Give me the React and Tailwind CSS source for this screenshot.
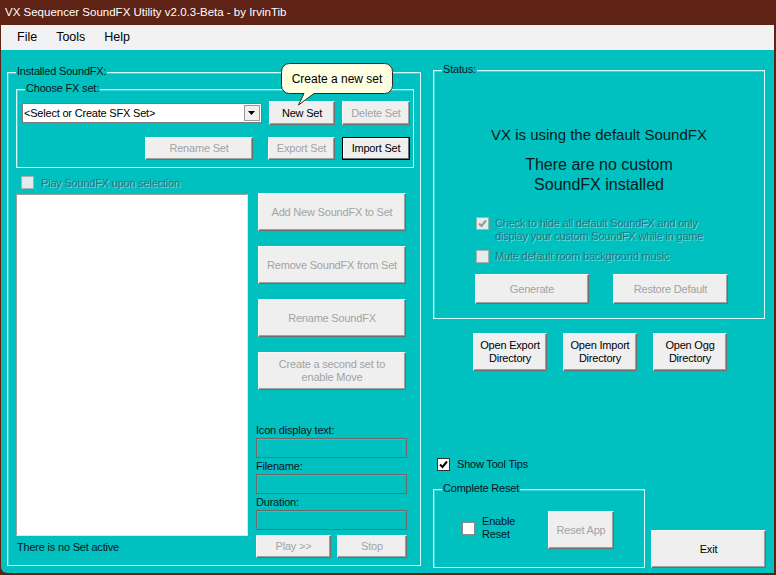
import React from 'react';

const Check = ({ color = '#000' }) => (
  <svg width="11" height="11" viewBox="0 0 11 11" className="block">
    <path d="M2 5.5 L4.5 8 L9 2.5" fill="none" stroke={color} strokeWidth="2" />
  </svg>
);

const CheckBox = ({ checked, disabled, strong }) => {
  const box = disabled
    ? 'bg-[#e3ecec] border-[#a8b0b0]'
    : strong
    ? 'bg-white border-[#333333]'
    : 'bg-white border-[#8a8a8a]';
  return (
    <div className={`w-[13px] h-[13px] shrink-0 border ${box} flex items-center justify-center`}>
      {checked && <Check color={disabled ? '#8f9a9a' : '#000'} />}
    </div>
  );
};

const Btn = ({ className = '', disabled, focus, children }) => (
  <div
    className={`flex items-center justify-center text-center leading-[13px] whitespace-nowrap bg-[#efefef] border shrink-0 ${
      focus
        ? 'border-black shadow-[inset_-1px_-1px_0_#707070,inset_1px_1px_0_#fff]'
        : 'border-t-[#fbfbfb] border-l-[#fbfbfb] border-r-[#6e6e6e] border-b-[#6e6e6e] shadow-[inset_-1px_-1px_0_#a0a0a0]'
    } ${disabled ? 'text-[#a3a3a3]' : 'text-black'} ${className}`}
  >
    <span>{children}</span>
  </div>
);

const Group = ({ label, className = '', children }) => (
  <div className={`relative border border-[#d8ffff] shadow-[inset_1px_1px_0_#3fd4d4] shrink-0 ${className}`}>
    <span className="absolute left-[8px] top-[-8px] px-[1px] bg-[#00c0c0] leading-[13px] whitespace-nowrap">{label}</span>
    {children}
  </div>
);

const Field = () => (
  <div className="w-[151px] h-[20px] border border-[#6a6a6a] shadow-[inset_1px_1px_0_#8a9a9a]" />
);

const Tooltip = () => (
  <div className="absolute left-[280px] top-[13px] w-[112px] h-[44px] tracking-normal">
    <svg width="112" height="44" className="absolute left-0 top-0">
      <path
        d="M8.5 0.5 H103.5 A8 8 0 0 1 111.5 8.5 V22.5 A8 8 0 0 1 103.5 30.5 H33 L17.5 42 L23 30.5 H8.5 A8 8 0 0 1 0.5 22.5 V8.5 A8 8 0 0 1 8.5 0.5 Z"
        fill="#ffffe1"
        stroke="#2b2b2b"
      />
    </svg>
    <div className="relative h-[31px] flex items-center justify-center text-[12px] text-black">
      Create a new set
    </div>
  </div>
);

export default function App() {
  return (
    <div className="w-[776px] h-[575px] bg-[#5e2314] flex flex-col overflow-hidden font-['Liberation_Sans',Arial,sans-serif]">
      <div className="h-[25px] shrink-0 flex items-center pl-[5px] text-white text-[11.5px]">
        VX Sequencer SoundFX Utility v2.0.3-Beta - by IrvinTib
      </div>
      <div className="flex-1 ml-[1px] mr-[2px] mb-[2px] flex flex-col rounded-bl-[6px] overflow-hidden">
        <div className="h-[25px] shrink-0 bg-[#f2f2f2] flex items-center text-[12.5px] text-black">
          <span className="ml-[16px]">File</span>
          <span className="ml-[19px]">Tools</span>
          <span className="ml-[19px]">Help</span>
        </div>

        <div className="flex-1 bg-[#00c0c0] relative flex items-start text-[11px] tracking-[-0.2px] text-[#0b1520]">
          {/* left: installed soundfx */}
          <Group label="Installed SoundFX:" className="ml-[6px] mt-[22px] w-[414px] h-[494px] flex flex-col">
            <Group label="Choose FX set:" className="ml-[8px] mt-[16px] w-[398px] h-[79px] flex flex-col">
              <div className="flex items-center mt-[11px]">
                <div className="ml-[5px] w-[240px] h-[20px] bg-white border border-[#7a7a7a] flex items-center">
                  <span className="pl-[1px] flex-1 text-black">&lt;Select or Create SFX Set&gt;</span>
                  <div className="w-[16px] h-[16px] mr-[1px] border border-[#9a9a9a] bg-[#f0f0f0] flex items-center justify-center">
                    <svg width="8" height="5" viewBox="0 0 8 5">
                      <path d="M0 0 H7 L3.5 4 Z" fill="#000" />
                    </svg>
                  </div>
                </div>
                <Btn className="ml-[7px] w-[66px] h-[24px]">New Set</Btn>
                <Btn disabled className="ml-[7px] w-[68px] h-[24px]">Delete Set</Btn>
              </div>
              <div className="flex mt-[12px]">
                <Btn disabled className="ml-[128px] w-[108px] h-[23px]">Rename Set</Btn>
                <Btn disabled className="ml-[15px] w-[67px] h-[23px]">Export Set</Btn>
                <Btn focus className="ml-[7px] w-[68px] h-[23px]">Import Set</Btn>
              </div>
            </Group>

            <div className="flex items-center mt-[8px] ml-[13px] h-[13px]">
              <CheckBox disabled />
              <span className="ml-[7px] mt-[2px] text-[#2d7380] [text-shadow:1px_1px_0_#60dede]">
                Play SoundFX upon selection
              </span>
            </div>

            <div className="flex mt-[4px]">
              <div className="ml-[8px] flex flex-col">
                <div className="mt-[1px] w-[232px] h-[342px] bg-white border border-t-[#a0a0a0] border-l-[#a0a0a0] border-r-[#e3e3e3] border-b-[#e3e3e3]" />
                <span className="mt-[5px] ml-[1px] leading-[13px]">There is no Set active</span>
              </div>
              <div className="ml-[8px] w-[151px] flex flex-col">
                <Btn disabled className="ml-[2px] w-[148px] h-[38px]">Add New SoundFX to Set</Btn>
                <Btn disabled className="ml-[2px] mt-[15px] w-[148px] h-[38px]">Remove SoundFX from Set</Btn>
                <Btn disabled className="ml-[2px] mt-[15px] w-[148px] h-[38px]">Rename SoundFX</Btn>
                <Btn disabled className="ml-[2px] mt-[15px] w-[148px] h-[38px]">
                  Create a second set to
                  <br />
                  enable Move
                </Btn>
                <span className="mt-[34px] leading-[13px]">Icon display text:</span>
                <div className="mt-[1px]"><Field /></div>
                <span className="mt-[2px] leading-[13px]">Filename:</span>
                <div className="mt-[1px]"><Field /></div>
                <span className="mt-[2px] leading-[13px]">Duration:</span>
                <div className="mt-[1px]"><Field /></div>
                <div className="flex mt-[5px]">
                  <Btn disabled className="w-[75px] h-[23px]">Play &gt;&gt;</Btn>
                  <Btn disabled className="ml-[6px] w-[70px] h-[23px]">Stop</Btn>
                </div>
              </div>
            </div>
          </Group>

          {/* right column */}
          <div className="ml-[12px] flex flex-col">
            <Group label="Status:" className="mt-[20px] w-[332px] h-[249px] flex flex-col">
              <div className="mt-[55px] text-center text-[15px] tracking-normal leading-[18px] text-[#0a1a1a]">
                VX is using the default SoundFX
              </div>
              <div className="mt-[11px] text-center text-[16px] tracking-normal leading-[20px] text-[#0a1a1a]">
                There are no custom
                <br />
                SoundFX installed
              </div>
              <div className="flex items-start mt-[22px] ml-[42px] text-[#2d7380] [text-shadow:1px_1px_0_#60dede]">
                <CheckBox disabled checked />
                <span className="ml-[6px] leading-[13px]">
                  Check to hide all default SoundFX and only
                  <br />
                  display your custom SoundFX while in game
                </span>
              </div>
              <div className="flex items-center mt-[7px] ml-[42px] text-[#2d7380] [text-shadow:1px_1px_0_#60dede]">
                <CheckBox disabled />
                <span className="ml-[6px] leading-[13px]">Mute default room background music</span>
              </div>
              <div className="flex mt-[11px] ml-[41px]">
                <Btn disabled className="w-[114px] h-[30px]">Generate</Btn>
                <Btn disabled className="ml-[24px] w-[115px] h-[30px]">Restore Default</Btn>
              </div>
            </Group>

            <div className="flex mt-[14px] ml-[40px]">
              <Btn className="w-[74px] h-[38px]">Open Export<br />Directory</Btn>
              <Btn className="ml-[16px] w-[74px] h-[38px]">Open Import<br />Directory</Btn>
              <Btn className="ml-[16px] w-[74px] h-[38px]">Open Ogg<br />Directory</Btn>
            </div>

            <div className="flex items-center mt-[87px] ml-[4px] h-[13px]">
              <CheckBox checked strong />
              <span className="ml-[7px]">Show Tool Tips</span>
            </div>

            <div className="flex items-end mt-[18px]">
              <Group label="Complete Reset" className="w-[212px] h-[79px] flex items-start">
                <div className="ml-[28px] mt-[32px] w-[86px] flex items-start">
                  <CheckBox />
                  <span className="ml-[7px] mt-[-7px] leading-[13px]">Enable<br />Reset</span>
                </div>
                <Btn disabled className="mt-[21px] w-[66px] h-[38px]">Reset App</Btn>
              </Group>
              <Btn className="ml-[6px] w-[115px] h-[38px]">Exit</Btn>
            </div>
          </div>

          <Tooltip />
        </div>
      </div>
    </div>
  );
}
